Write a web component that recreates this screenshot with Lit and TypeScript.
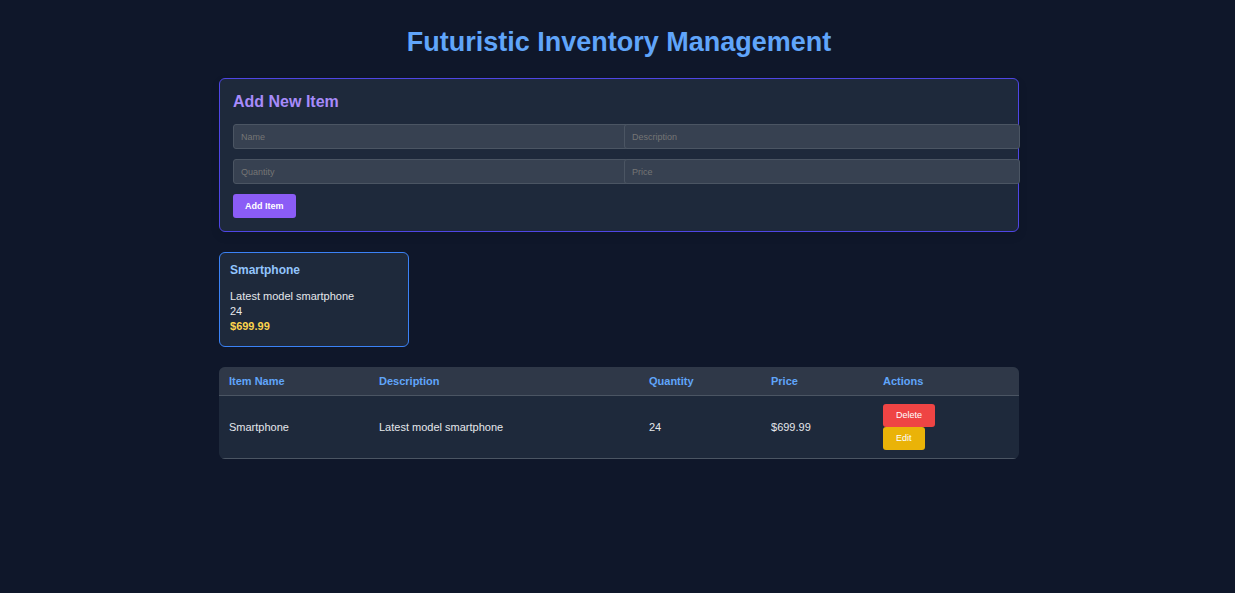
import { LitElement, html, css } from "lit";
import { customElement, state } from "lit/decorators.js";

interface Item {
  name: string;
  description: string;
  quantity: number;
  price: number;
}

@customElement("app-root")
export class AppRoot extends LitElement {
  static styles = css`
    :host {
      display: block;
      min-height: 100vh;
      box-sizing: border-box;
      padding: 24px 20px 20px 23px;
      background: #0f172a;
      color: #e5e7eb;
      font-family: "Liberation Sans", Arial, sans-serif;
      font-size: 11px;
      line-height: 15px;
    }
    .container {
      max-width: 800px;
      margin: 0 auto;
    }
    h1,
    h2,
    h3,
    p {
      margin: 0;
    }
    .title {
      margin-bottom: 18px;
      color: #60a5fa;
      font-size: 27px;
      line-height: 36px;
      text-align: center;
    }
    .panel {
      margin-bottom: 20px;
      padding: 13px;
      border: 1px solid #4f46e5;
      border-radius: 6px;
      background: #1e293b;
      box-shadow: 0 4px 10px rgba(0, 0, 0, 0.1);
    }
    .panel-title {
      margin-bottom: 12px;
      color: #a78bfa;
      font-size: 16px;
      line-height: 20px;
    }
    .fields {
      display: grid;
      grid-template-columns: 1fr 1fr;
      gap: 10px;
      margin-bottom: 10px;
    }
    .field {
      box-sizing: border-box;
      width: calc(100% + 15px);
      height: 25px;
      padding: 0 7px;
      border: 1px solid #4b5563;
      border-radius: 3px;
      background: #374151;
      color: #e5e7eb;
      font: 9px "Liberation Sans", Arial, sans-serif;
    }
    .field::placeholder {
      color: #757575;
    }
    .button {
      display: block;
      height: 23px;
      padding: 0 13px 2px;
      border: 0;
      border-radius: 3px;
      color: #fff;
      font: 9px "Liberation Sans", Arial, sans-serif;
      cursor: pointer;
    }
    .add {
      height: 24px;
      padding: 0 12px;
      background: #8b5cf6;
      font-weight: bold;
    }
    .delete {
      background: #ef4444;
    }
    .edit {
      background: #eab308;
    }
    .cards {
      display: grid;
      grid-template-columns: repeat(4, 1fr);
      gap: 13px;
      margin-bottom: 20px;
    }
    .card {
      padding: 9px 10px 12px;
      border: 1px solid #3b82f6;
      border-radius: 6px;
      background: #1e293b;
    }
    .card-title {
      margin-bottom: 11px;
      color: #93c5fd;
      font-size: 12px;
      line-height: 16px;
    }
    .card-price {
      color: #fcd34d;
      font-weight: bold;
    }
    .table {
      width: 100%;
      border-spacing: 0;
      border-radius: 6px;
      overflow: hidden;
      background: #1e293b;
      table-layout: fixed;
    }
    .table th,
    .table td {
      box-sizing: border-box;
      padding: 8px 10px;
      border-bottom: 1px solid #4b5563;
      text-align: left;
    }
    .table th {
      padding: 7px 10px 6px;
      background: #2f3848;
      color: #60a5fa;
    }
    .table .col-name {
      width: 150px;
    }
    .table .col-description {
      width: 270px;
    }
    .table .col-quantity {
      width: 122px;
    }
    .table .col-price {
      width: 112px;
    }
  `;

  @state() private items: Item[] = [
    { name: "Smartphone", description: "Latest model smartphone", quantity: 24, price: 699.99 },
  ];

  private remove(item: Item) {
    this.items = this.items.filter((other) => other !== item);
  }

  private add(event: Event) {
    event.preventDefault();
    const form = event.target as HTMLFormElement;
    const data = new FormData(form);
    this.items = [
      ...this.items,
      {
        name: String(data.get("name")),
        description: String(data.get("description")),
        quantity: Number(data.get("quantity")),
        price: Number(data.get("price")),
      },
    ];
    form.reset();
  }

  render() {
    return html`
      <main class="container">
        <h1 class="title">Futuristic Inventory Management</h1>
        <form class="panel" @submit=${this.add}>
          <h2 class="panel-title">Add New Item</h2>
          <div class="fields">
            <input class="field" name="name" placeholder="Name" aria-label="Name" />
            <input class="field" name="description" placeholder="Description" aria-label="Description" />
            <input class="field" name="quantity" type="number" placeholder="Quantity" aria-label="Quantity" />
            <input class="field" name="price" type="number" step="0.01" placeholder="Price" aria-label="Price" />
          </div>
          <button class="button add" type="submit">Add Item</button>
        </form>
        <section class="cards">
          ${this.items.map(
            (item) => html`
              <article class="card">
                <h3 class="card-title">${item.name}</h3>
                <p>${item.description}</p>
                <p>${item.quantity}</p>
                <p class="card-price">$${item.price.toFixed(2)}</p>
              </article>
            `
          )}
        </section>
        <table class="table">
          <thead>
            <tr>
              <th class="col-name">Item Name</th>
              <th class="col-description">Description</th>
              <th class="col-quantity">Quantity</th>
              <th class="col-price">Price</th>
              <th>Actions</th>
            </tr>
          </thead>
          <tbody>
            ${this.items.map(
              (item) => html`
                <tr>
                  <td>${item.name}</td>
                  <td>${item.description}</td>
                  <td>${item.quantity}</td>
                  <td>$${item.price.toFixed(2)}</td>
                  <td>
                    <button class="button delete" type="button" @click=${() => this.remove(item)}>Delete</button>
                    <button class="button edit" type="button">Edit</button>
                  </td>
                </tr>
              `
            )}
          </tbody>
        </table>
      </main>
    `;
  }
}
